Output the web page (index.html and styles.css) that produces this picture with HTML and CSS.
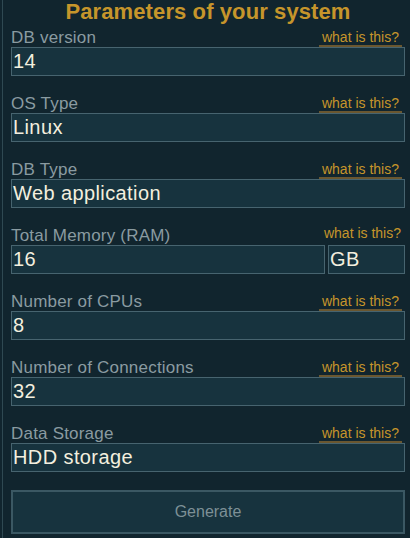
FILE: index.html
```html
<!DOCTYPE html>
<html>
<head>
<meta charset="utf-8">
<link rel="stylesheet" href="styles.css">
</head>
<body>
<div class="panel">
  <h1 class="title">Parameters of your system</h1>
  <div class="field first">
    <div class="head"><span class="label">DB version</span><span class="help">what is this?</span></div>
    <div class="box">14</div>
  </div>
  <div class="field">
    <div class="head"><span class="label">OS Type</span><span class="help">what is this?</span></div>
    <div class="box">Linux</div>
  </div>
  <div class="field">
    <div class="head"><span class="label">DB Type</span><span class="help">what is this?</span></div>
    <div class="box">Web application</div>
  </div>
  <div class="field">
    <div class="head"><span class="label">Total Memory (RAM)</span><span class="help plain">what is this?</span></div>
    <div class="split">
      <div class="box grow">16</div>
      <div class="box unit">GB</div>
    </div>
  </div>
  <div class="field">
    <div class="head"><span class="label">Number of CPUs</span><span class="help">what is this?</span></div>
    <div class="box">8</div>
  </div>
  <div class="field">
    <div class="head"><span class="label">Number of Connections</span><span class="help">what is this?</span></div>
    <div class="box">32</div>
  </div>
  <div class="field">
    <div class="head"><span class="label">Data Storage</span><span class="help">what is this?</span></div>
    <div class="box">HDD storage</div>
  </div>
  <button class="generate">Generate</button>
</div>
</body>
</html>
```
FILE: styles.css
```css
html, body {
  margin: 0;
  padding: 0;
  background: #11252e;
  height: 100%;
}
body {
  font-family: "Liberation Sans", Arial, sans-serif;
  overflow: hidden;
}
.panel {
  margin-left: 2px;
  border-left: 1px solid #2f4952;
  padding: 0 5px 0 8px;
  min-height: 538px;
  box-sizing: border-box;
}
.title {
  margin: 0;
  height: 29px;
  line-height: 24px;
  font-size: 22px;
  font-weight: bold;
  color: #c6952b;
  text-align: center;
  letter-spacing: 0.1px;
}
.field {
  margin-top: 19px;
}
.field.first {
  margin-top: 0;
}
.head {
  display: flex;
  justify-content: space-between;
  align-items: flex-end;
  height: 18px;
}
.label {
  font-size: 17px;
  line-height: 18px;
  color: #8a9ba1;
  letter-spacing: 0.2px;
}
.help {
  font-size: 14px;
  line-height: 15px;
  color: #c6952b;
  padding: 0 3px 0 3px;
  margin-right: 3px;
  border-bottom: 2px solid #6a5730;
}
.help.plain {
  border-bottom: none;
  margin-right: 4px;
  padding: 0;
  margin-bottom: 4px;
}
.box {
  height: 29px;
  box-sizing: border-box;
  background: #17333e;
  border: 1px solid #47646f;
  color: #f3efdf;
  font-size: 20px;
  line-height: 27px;
  padding-left: 1px;
  letter-spacing: 0.4px;
}
.split {
  display: flex;
  gap: 3px;
}
.grow {
  flex: 1;
}
.unit {
  width: 77px;
}
.generate {
  display: block;
  width: 100%;
  margin-top: 18px;
  height: 44px;
  background: #17333e;
  border: 2px solid #3b5863;
  color: #7d9096;
  font-family: "Liberation Sans", Arial, sans-serif;
  font-size: 16px;
}
```
